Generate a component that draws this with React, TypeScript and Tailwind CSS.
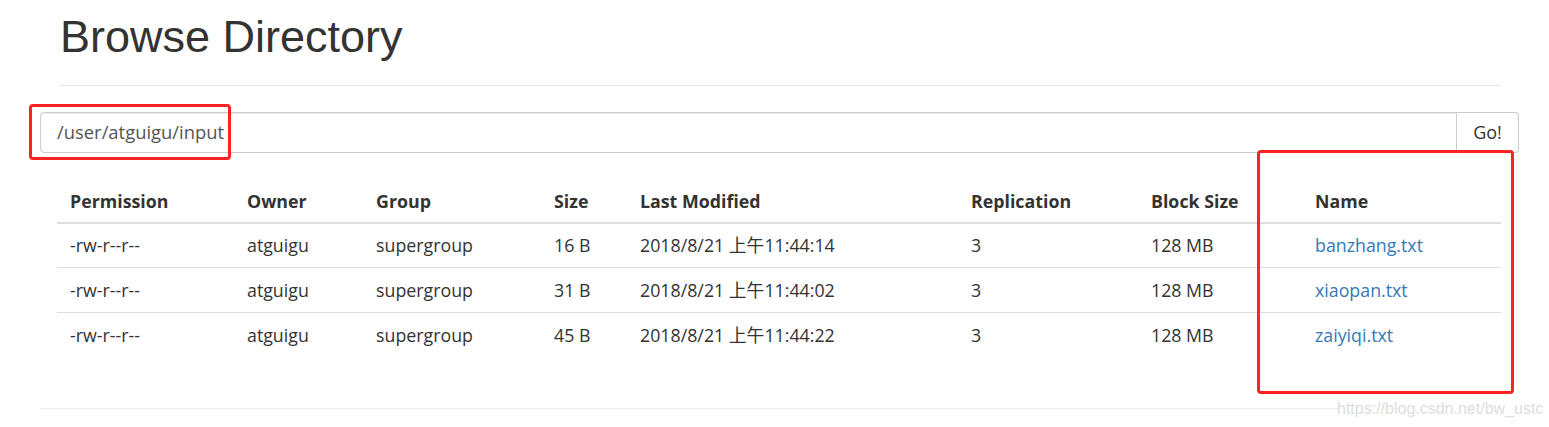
import React from 'react';

const columns = [
  { label: 'Permission', width: 'w-[177px]' },
  { label: 'Owner', width: 'w-[129px]' },
  { label: 'Group', width: 'w-[178px]' },
  { label: 'Size', width: 'w-[86px]' },
  { label: 'Last Modified', width: 'w-[331px]' },
  { label: 'Replication', width: 'w-[180px]' },
  { label: 'Block Size', width: 'w-[164px]' },
  { label: 'Name', width: 'w-[199px]' },
];

const files = [
  { size: '16 B', modified: '2018/8/21 上午11:44:14', name: 'banzhang.txt' },
  { size: '31 B', modified: '2018/8/21 上午11:44:02', name: 'xiaopan.txt' },
  { size: '45 B', modified: '2018/8/21 上午11:44:22', name: 'zaiyiqi.txt' },
];

const FileRow = ({ size, modified, name }: { size: string, modified: string, name: string }) => {
  const cells = ['-rw-r--r--', 'atguigu', 'supergroup', size, modified, '3', '128 MB'];
  return (
    <tr className="h-[45px] border-t border-[#dddddd]">
      {cells.map((c, i) => (
        <td key={i} className="pl-[13px] align-middle text-[#333333]">{c}</td>
      ))}
      <td className="pl-[13px] align-middle">
        <a href="#" className="text-[#337ab7]">{name}</a>
      </td>
    </tr>
  );
};

const App = () => {
  return (
    <div className="relative w-[1549px] h-[427px] bg-white overflow-hidden font-['Liberation_Sans','Noto_Sans_CJK_SC',sans-serif]">
      <div className="px-[40px]">
        <div className="ml-[20px] mr-[9px]">
          <h1 className="mt-[12px] text-[45px] leading-[49.5px] text-[#333333] font-normal">Browse Directory</h1>
          <div className="mt-[23px] border-t border-[#e5e5e5]"></div>
        </div>

        <div className="mt-[26px] flex w-[1479px] h-[41px]">
          <div className="flex-1 flex items-center pl-[16px] border border-[#cccccc] rounded-l-[4px] shadow-[inset_0_1px_1px_rgba(0,0,0,0.075)] text-[18.4px] text-[#555555] font-['Open_Sans','Noto_Sans_CJK_SC',sans-serif]">
            /user/atguigu/input
          </div>
          <button className="w-[62px] border border-l-0 border-[#cccccc] rounded-r-[4px] bg-white text-[18px] text-[#333333] font-['Open_Sans',sans-serif]">
            Go!
          </button>
        </div>

        <table className="mt-[24px] ml-[17px] w-[1444px] table-fixed border-collapse text-[17.8px] font-['Open_Sans','Noto_Sans_CJK_SC',sans-serif]">
          <thead>
            <tr className="h-[46px] border-b-2 border-[#dddddd]">
              {columns.map((col) => (
                <th key={col.label} className={`${col.width} pl-[13px] pt-[4px] text-left align-middle font-bold text-[#333333]`}>{col.label}</th>
              ))}
            </tr>
          </thead>
          <tbody>
            {files.map((f) => (
              <FileRow key={f.name} size={f.size} modified={f.modified} name={f.name} />
            ))}
          </tbody>
        </table>
      </div>

      <div className="absolute left-[40px] top-[408px] w-[1300px] border-t border-[#eeeeee]"></div>
      <div className="absolute left-[1337px] top-[400px] text-[16px] leading-[18px] text-[#dddddd] font-['Liberation_Sans',sans-serif]">https://blog.csdn.net/bw_ustc</div>

      <div className="absolute left-[29px] top-[104px] w-[202px] h-[56px] border-[3px] border-[#ff2222] rounded-[4px]"></div>
      <div className="absolute left-[1257px] top-[150px] w-[257px] h-[244px] border-[3px] border-[#ff2222] rounded-[4px]"></div>
    </div>
  );
};

export default App;
